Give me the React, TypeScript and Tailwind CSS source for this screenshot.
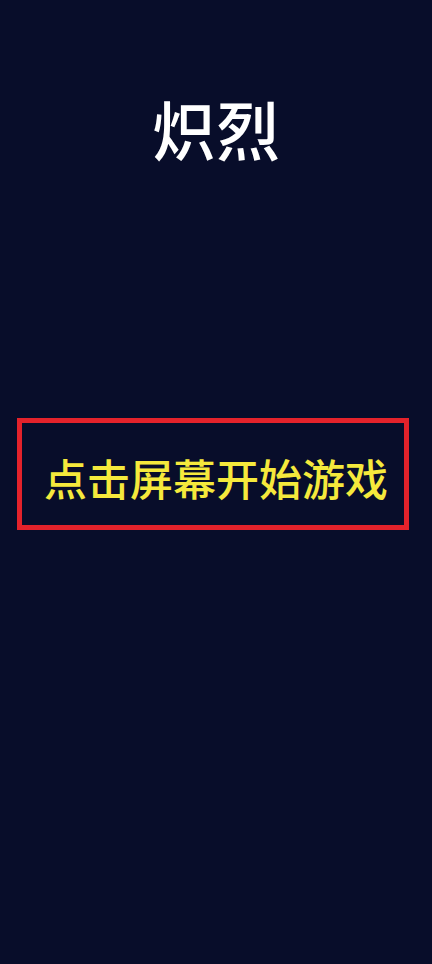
import React from 'react';

export default function App() {
  return (
    <div
      className="flex flex-col w-[432px] h-[964px] bg-[#080d2a] overflow-hidden"
      style={{ fontFamily: '"Noto Sans CJK SC", "Noto Sans", sans-serif' }}
    >
      <h1 className="pt-[95px] text-center text-[64px] leading-none font-medium text-white">炽烈</h1>

      <div className="mt-[259px] ml-[17px] w-[392px] h-[112px] border-[5px] border-[#e3222b] flex items-center pl-[22px] pt-[6px]">
        <span className="text-[43px] leading-none font-medium text-[#f5e93c] whitespace-nowrap">
          点击屏幕开始游戏
        </span>
      </div>
    </div>
  );
}
